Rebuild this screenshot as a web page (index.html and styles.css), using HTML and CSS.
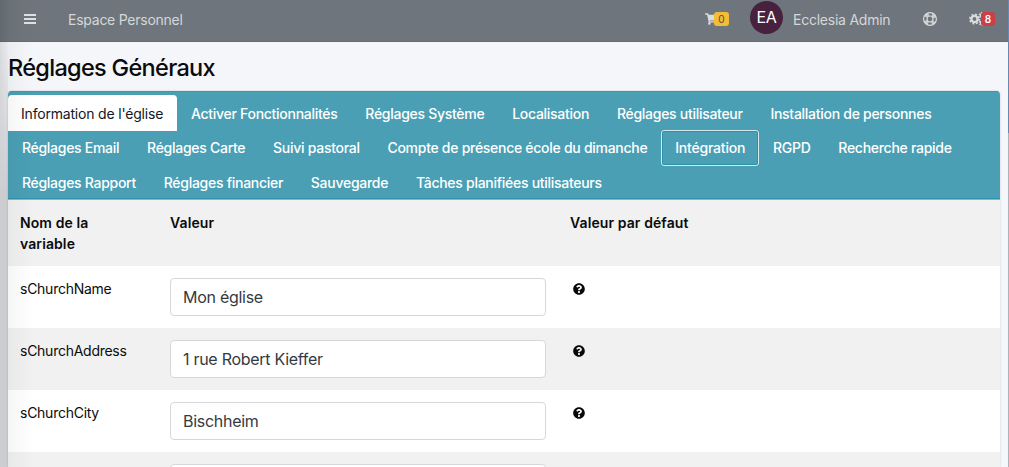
FILE: index.html
```
<!DOCTYPE html>
<html lang="fr">
<head>
<meta charset="utf-8">
<title>Réglages Généraux</title>
<link rel="stylesheet" href="styles.css">
</head>
<body>
<svg class="defs" aria-hidden="true">
  <symbol id="help" viewBox="0 0 512 512"><path d="M504 256c0 136.997-111.043 248-248 248S8 392.997 8 256C8 119.083 119.043 8 256 8s248 111.083 248 248zM262.655 90c-54.497 0-89.255 22.957-116.549 63.758-3.536 5.286-2.353 12.415 2.715 16.258l34.699 26.31c5.205 3.947 12.621 3.008 16.665-2.122 17.864-22.658 30.113-35.797 57.303-35.797 20.429 0 45.698 13.148 45.698 32.958 0 14.976-12.363 22.667-32.534 33.976C247.128 238.528 216 254.941 216 296v4c0 6.627 5.373 12 12 12h56c6.627 0 12-5.373 12-12v-1.333c0-28.462 83.186-29.647 83.186-106.667 0-58.002-60.165-102-116.531-102zM256 338c-25.365 0-46 20.635-46 46 0 25.364 20.635 46 46 46s46-20.636 46-46c0-25.365-20.635-46-46-46z"/></symbol>
</svg>
<header class="navbar">
  <svg class="bars" viewBox="0 0 12 12"><path d="M0 2h12M0 6h12M0 10h12"/></svg>
  <span class="home">Espace Personnel</span>
  <div class="cart">
    <svg class="cart-icon" viewBox="0 0 576 512"><path d="M528.12 301.319l47.273-208C578.806 78.301 567.391 64 551.99 64H159.208l-9.166-44.81C147.758 8.021 137.93 0 126.529 0H24C10.745 0 0 10.745 0 24v16c0 13.255 10.745 24 24 24h69.883l70.248 343.435C147.325 417.1 136 435.222 136 456c0 30.928 25.072 56 56 56s56-25.072 56-56c0-15.674-6.447-29.835-16.824-40h209.647C430.447 426.165 424 440.326 424 456c0 30.928 25.072 56 56 56s56-25.072 56-56c0-22.172-12.888-41.332-31.579-50.405l5.517-24.276c3.413-15.018-8.002-29.319-23.403-29.319H218.117l-6.545-32h293.145c11.206 0 20.92-7.754 23.403-18.681z"/></svg>
    <span class="badge warn">0</span>
  </div>
  <span class="avatar">EA</span>
  <span class="user">Ecclesia Admin</span>
  <svg class="ring" viewBox="0 0 14 14"><circle cx="7" cy="7" r="6.4" class="thin"/><circle cx="7" cy="7" r="3" class="thin"/><circle cx="7" cy="7" r="4.7" class="segments"/></svg>
  <div class="cogs">
    <svg class="cogs-icon" viewBox="0 0 17 14"><circle cx="5.5" cy="7" r="3.1" class="hub"/><circle cx="5.5" cy="7" r="4.7" class="teeth"/><circle cx="13" cy="3.2" r="1.7" class="small-hub"/><circle cx="13" cy="3.2" r="2.7" class="small-teeth"/><circle cx="13" cy="10.8" r="1.7" class="small-hub"/><circle cx="13" cy="10.8" r="2.7" class="small-teeth"/></svg>
    <span class="badge danger">8</span>
  </div>
</header>
<main class="content">
  <h1 class="title">Réglages Généraux</h1>
  <section class="card">
    <nav class="tabs">
      <div class="tab-row">
        <a class="tab active">Information de l'église</a><a class="tab">Activer Fonctionnalités</a><a class="tab">Réglages Système</a><a class="tab">Localisation</a><a class="tab">Réglages utilisateur</a><a class="tab">Installation de personnes</a>
      </div>
      <div class="tab-row">
        <a class="tab">Réglages Email</a><a class="tab">Réglages Carte</a><a class="tab">Suivi pastoral</a><a class="tab">Compte de présence école du dimanche</a><a class="tab focused">Intégration</a><a class="tab">RGPD</a><a class="tab">Recherche rapide</a>
      </div>
      <div class="tab-row">
        <a class="tab">Réglages Rapport</a><a class="tab">Réglages financier</a><a class="tab">Sauvegarde</a><a class="tab">Tâches planifiées utilisateurs</a>
      </div>
    </nav>
    <div class="row head"><span class="name">Nom de la variable</span><span>Valeur</span><span class="default">Valeur par défaut</span></div>
    <div class="row"><span class="name">sChurchName</span><div class="field">Mon église</div><svg class="help"><use href="#help"/></svg></div>
    <div class="row odd"><span class="name">sChurchAddress</span><div class="field">1 rue Robert Kieffer</div><svg class="help"><use href="#help"/></svg></div>
    <div class="row"><span class="name">sChurchCity</span><div class="field">Bischheim</div><svg class="help"><use href="#help"/></svg></div>
    <div class="row odd last"><span class="name"></span><div class="field"></div></div>
  </section>
</main>
<div class="edge-shadow"></div>
<div class="edge-strip"></div>
<div class="window-edge"></div>
</body>
</html>
```
FILE: styles.css
```
* { box-sizing: border-box; }
body {
  margin: 0;
  height: 467px;
  overflow: hidden;
  background: #f4f6f9;
  color: #101216;
  font: 14px/21px Inter, "Liberation Sans", sans-serif;
}
.defs { position: absolute; width: 0; height: 0; }

.navbar {
  display: flex;
  align-items: center;
  height: 42px;
  padding: 0 14px 3px 24px;
  background: #6e757c;
  border-bottom: 1px solid #666d75;
  color: #d5d7d9;
}
.navbar svg { flex: none; fill: #d9dbdc; }
.navbar .bars { width: 12px; height: 12px; stroke: #dfe0e1; stroke-width: 2; }
.home { margin-left: 32px; width: 637px; letter-spacing: -.25px; }
.cart, .cogs { display: flex; align-items: center; }
.cart { width: 45px; }
.cart-icon { width: 13px; height: 12px; }
.badge {
  position: relative;
  height: 14px;
  border-radius: 3px;
  font-size: 10px;
  line-height: 14px;
  text-align: center;
}
.warn { width: 15px; margin-left: -4px; background: #f4bd38; color: #5d4a22; }
.danger { width: 14px; margin-left: -5px; background: #cb3f49; color: #fff; font-weight: 600; }
.avatar {
  width: 33px;
  height: 33px;
  margin-top: -4px;
  border-radius: 50%;
  background: #48213f;
  color: #fff;
  font-size: 16px;
  line-height: 33px;
  text-align: center;
  letter-spacing: -.3px;
}
.user { margin-left: 10px; width: 130px; letter-spacing: -.24px; }
.ring { width: 14px; height: 14px; margin-right: 32px; }
.ring circle { fill: none; stroke: #d9dbdc; }
.ring .thin { stroke-width: 1.2; }
.ring .segments { stroke-width: 3.4; stroke-dasharray: 4.1 3.282; stroke-dashoffset: 2.05; transform: rotate(45deg); transform-origin: 7px 7px; opacity: .85; }
.cogs-icon { width: 17px; height: 14px; }
.cogs circle { fill: none; stroke: #d9dbdc; }
.cogs .hub { stroke-width: 2.4; }
.cogs .teeth { stroke-width: 1.7; stroke-dasharray: 1.9 1.791; }
.cogs .small-hub { stroke-width: 1.4; }
.cogs .small-teeth { stroke-width: 1.1; stroke-dasharray: 1.4 1.427; }

.content { padding: 10px 9px 0 8px; }
.title {
  margin: 0 0 7px;
  color: #090b0e;
  font-size: 23.5px;
  font-weight: 500;
  line-height: 32px;
  letter-spacing: -.69px;
}
.card { border-radius: 4px 4px 0 0; overflow: hidden; height: 376px; background: #fff; box-shadow: 0 0 2px #c3c8ce; }
.tabs { height: 109px; padding-top: 3px; background: #4a9fb5; border-top: 1px solid #3c97ad; border-bottom: 1px solid #84b9c6; box-shadow: inset 0 -1px #3094aa; }
.tab-row { display: flex; height: 34.7px; }
.tab {
  height: 36px;
  padding: 6.5px 12.9px;
  border: 1px solid transparent;
  border-radius: 4px 4px 0 0;
  color: #fff;
  font-weight: 500;
  white-space: nowrap;
  letter-spacing: -.28px;
}
.active { padding-left: 12px; background: #fff; color: #101728; font-weight: 400; letter-spacing: -.19px; }
.focused { border-color: #d5e8ec; border-radius: 3px; box-shadow: inset 0 0 0 1px #2c91a9; letter-spacing: -.2px; }

.row { display: grid; grid-template-columns: 150px 400px 1fr; height: 62px; padding: 12px; color: #0a0b0d; }
.odd, .head { background: #f1f1f1; }
.head { height: 66.4px; padding-top: 12.4px; font-weight: 600; letter-spacing: .1px; }
.last { height: 16px; padding-bottom: 0; overflow: hidden; }
.head .name { width: 90px; }
.field {
  width: 376px;
  height: 38px;
  padding: 7px 12px;
  border: 1px solid #d4d8dd;
  border-radius: 4px;
  background: #fff;
  color: #343a42;
  font-size: 16px;
  line-height: 23px;
  letter-spacing: -.28px;
}
.row:not(.head) .name { letter-spacing: -.26px; }
.help { width: 12px; height: 12px; margin: 5px 0 0 3px; fill: #08090c; }

.edge-shadow {
  position: absolute;
  inset: 0 auto 0 0;
  width: 34px;
  background: linear-gradient(90deg, rgba(0,0,0,.11), rgba(0,0,0,.035) 9px, rgba(0,0,0,.015) 22px, transparent);
}
.edge-strip { position: absolute; inset: 43px auto 0 0; width: 8px; background: linear-gradient(90deg, rgba(0,0,0,.06), rgba(0,0,0,.13)); mask-image: linear-gradient(transparent, #000 150px); }
.window-edge { position: absolute; inset: 0 0 0 auto; width: 1px; background: linear-gradient(#6688b2 0 133px, #aeb3bb 133px); }
```
